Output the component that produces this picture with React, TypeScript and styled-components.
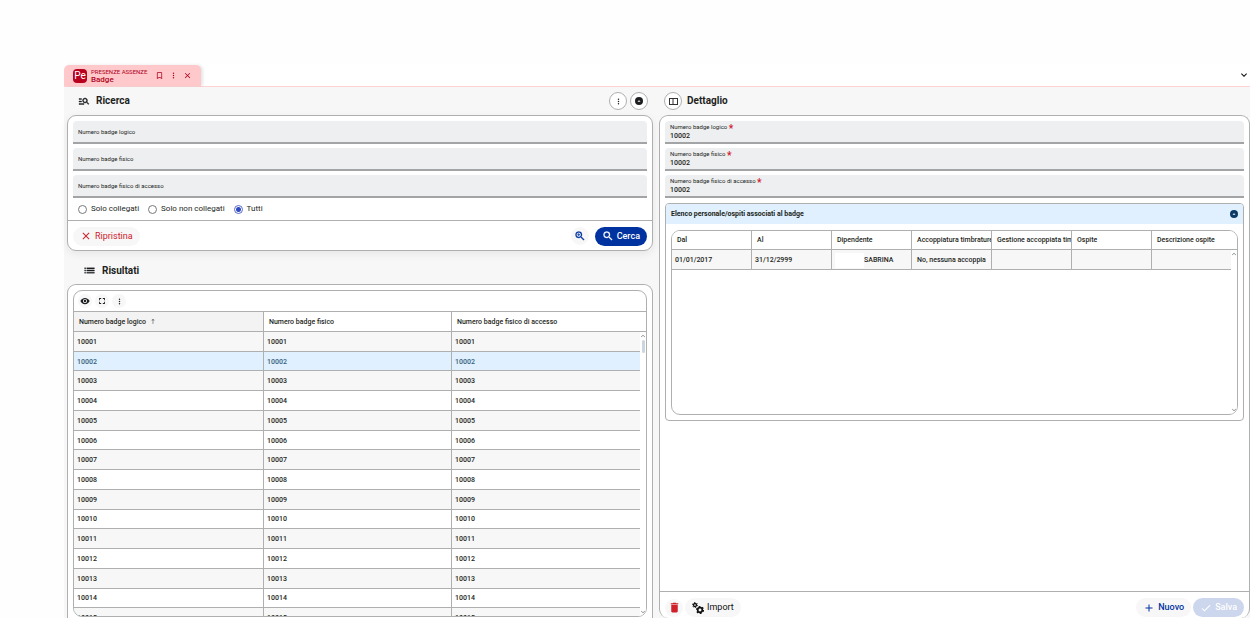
import React from "react";
import styled, { createGlobalStyle, css } from "styled-components";
import {
  MdAdd,
  MdBookmarkBorder,
  MdCheck,
  MdClose,
  MdDelete,
  MdFullscreen,
  MdKeyboardArrowDown,
  MdKeyboardArrowUp,
  MdList,
  MdManageSearch,
  MdMoreVert,
  MdSearch,
  MdVisibility,
  MdZoomIn,
} from "react-icons/md";

const line = "#aeb0b0";
const blue = "#0033a0";
const red = "#d0202a";

const GlobalStyle = createGlobalStyle`
  * { box-sizing: border-box; }
  body {
    margin: 0;
    background: #fefefe;
    color: #1d1f21;
    font-family: Roboto, "Liberation Sans", sans-serif;
    font-size: 7px;
  }
  button, input { font: inherit; color: inherit; }
  button { cursor: pointer; }
  svg { display: block; flex: none; }
  svg path[fill="none"] { stroke: none; }
`;

const Shell = styled.div`
  display: flex;
  flex-direction: column;
  height: 100vh;
  padding: 64px 0 0 64px;
  overflow: hidden;
`;

const TabBar = styled.nav`
  display: flex;
  justify-content: space-between;
  align-items: stretch;
  flex: none;
  height: 23px;
  border-bottom: 1px solid #ffd3d3;
  background: #ffffff;
`;

const Tab = styled.div`
  display: flex;
  align-items: center;
  gap: 4px;
  margin-top: 1px;
  padding: 0 9px;
  border-radius: 5px 5px 0 0;
  background: #ffc9cc;
  color: #b00020;
  box-shadow: 2px 0 3px #0000001a;
`;

const AppLogo = styled.span`
  display: grid;
  place-items: center;
  width: 14px;
  height: 14px;
  border-radius: 4px;
  background: #b8001f;
  color: #ffffff;
  font-size: 10px;
  font-weight: 400;
  line-height: 12px;
`;

const TabText = styled.span`
  display: flex;
  flex-direction: column;
  font-size: 8px;
  line-height: 9px;
  font-weight: 500;
  margin-right: 4px;
`;

const TabApp = styled.span`
  font-size: 6px;
  font-weight: 400;
  line-height: 7px;
`;

const PlainButton = styled.button`
  display: grid;
  place-items: center;
  padding: 0;
  border: 0;
  background: none;
`;

const TabActions = styled.span`
  display: flex;
  gap: 5px;
`;

const TabsToggle = styled(PlainButton)`
  color: #111111;
`;

const Workspace = styled.main`
  display: grid;
  grid-template-columns: 1fr 1fr;
  flex: 1;
  min-height: 0;
  background: #f7f7f7;
`;

const SearchSide = styled.div`
  display: flex;
  flex-direction: column;
  min-width: 0;
  min-height: 0;
  padding: 0 4px 0 3px;
`;

const DetailSide = styled(SearchSide)`
  padding: 0 0 0 2px;
`;

const PanelHead = styled.header<{ $tall?: boolean }>`
  display: flex;
  align-items: center;
  gap: 6px;
  flex: none;
  height: ${(p) => (p.$tall ? 33 : 28)}px;
  padding: ${(p) => (p.$tall ? "6px 5px 0 16px" : "0 5px 0 11px")};
`;

const DetailHead = styled(PanelHead)`
  padding-left: 5px;
  gap: 5px;
`;

const Title = styled.h2`
  flex: 1;
  margin: 0;
  font-size: 10px;
  line-height: 14px;
  font-weight: 700;
`;

const RoundButton = styled(PlainButton)`
  width: 18px;
  height: 18px;
  border: 1px solid ${line};
  border-radius: 50%;
  background: #ffffff;
`;

const HeadActions = styled.div`
  display: flex;
  gap: 3px;
`;

const Card = styled.section`
  display: flex;
  flex-direction: column;
  border: 1px solid ${line};
  border-radius: 9px;
  background: #ffffff;
`;

const SearchCard = styled(Card)`
  flex: none;
  box-shadow: 0 3px 8px #00000012;
`;

const ResultsCard = styled(Card)`
  flex: 1;
  min-height: 0;
  padding: 5px 5px 1px;
  border-bottom: 0;
  border-radius: 9px 9px 0 0;
`;

const DetailCard = styled(Card)`
  flex: 1;
  min-height: 0;
  border-bottom: 0;
`;

const Fields = styled.div`
  display: flex;
  flex-direction: column;
  gap: 4px;
  padding: 5px 5px 0;
`;

const FieldBox = styled.div<{ $stacked?: boolean }>`
  display: flex;
  height: 23px;
  padding: 0 5px;
  border-bottom: 2px solid #a2a4a5;
  border-radius: 4px 4px 0 0;
  background: #edeff1;
  ${(p) =>
    p.$stacked
      ? css`
          flex-direction: column;
          padding-top: 2px;
        `
      : css`
          align-items: center;
        `}
`;

const FieldLabel = styled.label`
  flex: none;
  height: 8px;
  font-size: 6px;
  line-height: 8px;
  white-space: nowrap;
`;

const Required = styled.span`
  color: ${red};
  font-size: 10px;
  font-weight: 700;
  line-height: 6px;
  vertical-align: -3px;
`;

const FieldInput = styled.input`
  flex: 1;
  min-width: 0;
  min-height: 0;
  padding: 0;
  border: 0;
  outline: 0;
  background: transparent;
  font-size: 7px;
  font-weight: 500;
  line-height: 9px;
`;

const Choices = styled.div`
  display: flex;
  align-items: center;
  gap: 9px;
  height: 22px;
  padding: 0 10px;
`;

const Choice = styled.label`
  display: flex;
  align-items: center;
  gap: 4px;
  font-size: 8px;
  line-height: 10px;
`;

const Radio = styled.input`
  appearance: none;
  width: 9px;
  height: 9px;
  margin: 0;
  border: 1px solid #77797b;
  border-radius: 50%;
  background: #ffffff;
  &:checked {
    border-color: #5a6cc8;
    background: radial-gradient(circle, #2f48c4 2px, #ffffff 3px);
  }
`;

const CardFoot = styled.footer`
  display: flex;
  align-items: center;
  gap: 2px;
  flex: none;
  height: 30px;
  padding: 1px 5px 0;
  border-top: 1px solid ${line};
`;

const DetailFoot = styled(CardFoot)`
  height: 27px;
  padding-top: 5px;
`;

const Spacer = styled.span`
  flex: 1;
`;

const tones = {
  danger: css`
    color: ${red};
    background: #f7f7f7;
    font-weight: 400;
  `,
  plain: css`
    color: #111111;
    background: #f7f7f7;
    font-weight: 400;
  `,
  link: css`
    color: ${blue};
    background: #f7f7f7;
  `,
  primary: css`
    color: #ffffff;
    background: ${blue};
  `,
  muted: css`
    color: #ffffff;
    background: #ccd6ec;
  `,
};

const Pill = styled.button<{ $tone: keyof typeof tones }>`
  display: flex;
  align-items: center;
  gap: 3px;
  height: 19px;
  padding: 0 7px;
  border: 0;
  border-radius: 10px;
  font-size: 9px;
  font-weight: 500;
  line-height: 11px;
  ${(p) => tones[p.$tone]}
`;

const IconPill = styled(Pill)`
  justify-content: center;
  width: 18px;
  height: 18px;
  padding: 0;
`;

const SearchActions = styled.div`
  display: flex;
  align-items: center;
  gap: 6px;
`;

const GridFrame = styled.div`
  position: relative;
  display: flex;
  flex-direction: column;
  flex: 1;
  min-height: 0;
  overflow: hidden;
  border: 1px solid ${line};
  border-radius: 9px;
  background: #ffffff;
`;

const GridTools = styled.div`
  display: flex;
  align-items: center;
  flex: none;
  height: 21px;
  padding-left: 2px;
  border-bottom: 1px solid ${line};
`;

const ToolButton = styled(PlainButton)`
  width: 14px;
  height: 14px;
  margin: 0 2px;
  border-radius: 50%;
  background: #f7f7f7;
  & + & {
    margin-left: 1px;
  }
`;

const ResultTable = styled.table`
  display: block;
  font-size: 7px;
  tr {
    display: grid;
    grid-template-columns: 190px 188px 1fr;
    border-bottom: 1px solid ${line};
  }
  thead tr {
    height: 20px;
  }
  thead,
  tbody {
    display: block;
  }
  tbody {
    display: grid;
    grid-template-rows: repeat(15, 1fr);
    height: 296px;
    margin-right: 6px;
  }
`;

const HeadCell = styled.th<{ $sorted?: boolean }>`
  display: flex;
  align-items: center;
  gap: 4px;
  min-width: 0;
  overflow: hidden;
  padding: 1px 0 0 5px;
  border-right: 1px solid ${line};
  background: ${(p) => (p.$sorted ? "#f3f3f3" : "#ffffff")};
  font-size: 7px;
  font-weight: 500;
  line-height: 9px;
  white-space: nowrap;
  &:last-child {
    border-right: 0;
  }
`;

const SortArrow = styled.span`
  color: #55585a;
  font-family: "DejaVu Sans", sans-serif;
  font-size: 7px;
  font-weight: 400;
`;

const Row = styled.tr<{ $selected?: boolean; $striped?: boolean }>`
  background: ${(p) => (p.$selected ? "#e0f0fe" : p.$striped ? "#f7f7f7" : "#ffffff")};
  color: ${(p) => (p.$selected ? "#35607f" : "#1d1f21")};
`;

const Cell = styled.td<{ $inset?: boolean }>`
  display: flex;
  align-items: center;
  min-width: 0;
  overflow: hidden;
  padding: 2px 0 0 ${(p) => (p.$inset ? 5 : 3)}px;
  border-right: 1px solid ${line};
  font-weight: 500;
  line-height: 9px;
  white-space: nowrap;
  &:last-child {
    border-right: 0;
  }
`;

const ScrollRail = styled.div<{ $top: number }>`
  position: absolute;
  top: ${(p) => p.$top}px;
  right: 0;
  bottom: 0;
  width: 6px;
  display: flex;
  flex-direction: column;
  align-items: center;
  background: #ffffff;
  color: #77797b;
`;

const ScrollThumb = styled.span`
  width: 3px;
  height: 13px;
  border-radius: 2px;
  background: #ccd6e0;
`;

const LinkedCard = styled.section`
  display: flex;
  flex-direction: column;
  height: 218px;
  margin: 5px 5px 0;
  overflow: hidden;
  border: 1px solid ${line};
  border-radius: 4px;
`;

const LinkedHead = styled.header`
  display: flex;
  align-items: center;
  justify-content: space-between;
  flex: none;
  height: 20px;
  padding: 0 5px;
  background: #e0f0fe;
  color: #0b3a66;
`;

const LinkedTitle = styled.h3`
  margin: 0;
  font-size: 7px;
  line-height: 9px;
  font-weight: 700;
  color: #1d1f21;
`;

const LinkedBody = styled.div`
  display: flex;
  flex: 1;
  min-height: 0;
  padding: 6px 5px 5px;
`;

const LinkedTable = styled.table`
  display: block;
  font-size: 7px;
  thead,
  tbody {
    display: block;
  }
  tbody {
    margin-right: 6px;
  }
  tr {
    display: grid;
    grid-template-columns: repeat(6, 80px) 1fr;
    border-bottom: 1px solid ${line};
  }
  thead tr {
    height: 19px;
  }
  tbody tr {
    height: 20px;
  }
`;

const Masked = styled.span`
  width: 29px;
  height: 15px;
  background: #ffffff;
`;

const DetailScroll = styled.div`
  flex: 1;
  min-height: 0;
  overflow: hidden;
`;

function PanelIcon() {
  return (
    <svg width="9" height="9" viewBox="0 0 18 18" fill="none" stroke="#333" strokeWidth="2">
      <rect x="1" y="3" width="16" height="12" />
      <path d="M8 3v12" stroke="#333" fill="#333" />
    </svg>
  );
}

function CollapseIcon() {
  return (
    <svg width="8" height="8" viewBox="0 0 16 16">
      <circle cx="8" cy="8" r="8" fill="currentColor" />
      <path d="M6 9 8 7l2 2z" fill="#fff" stroke="#fff" />
    </svg>
  );
}

function GearsIcon() {
  return (
    <svg width="12" height="12" viewBox="0 0 24 24" fill="none" stroke="#111">
      <circle cx="6" cy="6" r="3" strokeWidth="2.6" />
      <circle cx="6" cy="6" r="5" strokeWidth="2" strokeDasharray="2.6 2.63" />
      <circle cx="16" cy="16" r="4.6" strokeWidth="3.4" />
      <circle cx="16" cy="16" r="6.8" strokeWidth="2.6" strokeDasharray="3.6 3.52" />
    </svg>
  );
}

const searchFields = [
  ["logico", "Numero badge logico"],
  ["fisico", "Numero badge fisico"],
  ["accesso", "Numero badge fisico di accesso"],
];

const filters = ["Solo collegati", "Solo non collegati", "Tutti"];

const badges = Array.from({ length: 15 }, (_, i) => String(10001 + i));

const linkedColumns = [
  "Dal",
  "Al",
  "Dipendente",
  "Accoppiatura timbrature",
  "Gestione accoppiata tim",
  "Ospite",
  "Descrizione ospite",
];

export default function App() {
  return (
    <>
      <GlobalStyle />
      <Shell>
        <TabBar>
          <Tab>
            <AppLogo>Pe</AppLogo>
            <TabText>
              <TabApp>PRESENZE ASSENZE</TabApp>
              Badge
            </TabText>
            <TabActions>
              <PlainButton aria-label="Aggiungi ai preferiti"><MdBookmarkBorder size={9} /></PlainButton>
              <PlainButton aria-label="Altre opzioni"><MdMoreVert size={9} /></PlainButton>
              <PlainButton aria-label="Chiudi scheda"><MdClose size={9} /></PlainButton>
            </TabActions>
          </Tab>
          <TabsToggle aria-label="Elenco schede">
            <MdKeyboardArrowDown size={12} stroke="currentColor" />
          </TabsToggle>
        </TabBar>

        <Workspace>
          <SearchSide>
            <PanelHead>
              <MdManageSearch size={12} stroke="currentColor" strokeWidth={0.8} />
              <Title>Ricerca</Title>
              <HeadActions>
                <RoundButton aria-label="Opzioni ricerca"><MdMoreVert size={9} /></RoundButton>
                <RoundButton aria-label="Comprimi ricerca"><CollapseIcon /></RoundButton>
              </HeadActions>
            </PanelHead>

            <SearchCard>
              <Fields>
                {searchFields.map(([id, label]) => (
                  <FieldBox key={id}>
                    <FieldLabel htmlFor={`cerca-${id}`}>{label}</FieldLabel>
                    <FieldInput id={`cerca-${id}`} type="text" />
                  </FieldBox>
                ))}
              </Fields>
              <Choices>
                {filters.map((label) => (
                  <Choice key={label}>
                    <Radio type="radio" name="collegati" defaultChecked={label === "Tutti"} />
                    {label}
                  </Choice>
                ))}
              </Choices>
              <CardFoot>
                <Pill $tone="danger">
                  <MdClose size={12} />
                  Ripristina
                </Pill>
                <Spacer />
                <SearchActions>
                  <IconPill $tone="link" aria-label="Ricerca avanzata">
                    <MdZoomIn size={12} stroke="currentColor" strokeWidth={0.6} />
                  </IconPill>
                  <Pill $tone="primary">
                    <MdSearch size={12} stroke="currentColor" strokeWidth={0.6} />
                    Cerca
                  </Pill>
                </SearchActions>
              </CardFoot>
            </SearchCard>

            <PanelHead $tall>
              <MdList size={13} stroke="currentColor" strokeWidth={0.6} />
              <Title>Risultati</Title>
            </PanelHead>

            <ResultsCard>
              <GridFrame>
                <GridTools>
                  <ToolButton aria-label="Colonne visibili"><MdVisibility size={10} /></ToolButton>
                  <ToolButton aria-label="Schermo intero"><MdFullscreen size={10} /></ToolButton>
                  <ToolButton aria-label="Altre azioni"><MdMoreVert size={9} /></ToolButton>
                </GridTools>
                <ResultTable>
                  <thead>
                    <tr>
                      <HeadCell $sorted>Numero badge logico <SortArrow>↑</SortArrow></HeadCell>
                      <HeadCell>Numero badge fisico</HeadCell>
                      <HeadCell>Numero badge fisico di accesso</HeadCell>
                    </tr>
                  </thead>
                  <tbody>
                    {badges.map((badge, i) => (
                      <Row key={badge} $selected={badge === "10002"} $striped={i % 2 === 0}>
                        <Cell>{badge}</Cell>
                        <Cell>{badge}</Cell>
                        <Cell>{badge}</Cell>
                      </Row>
                    ))}
                  </tbody>
                </ResultTable>
                <ScrollRail $top={41}>
                  <MdKeyboardArrowUp size={8} />
                  <ScrollThumb />
                  <Spacer />
                  <MdKeyboardArrowDown size={8} stroke="currentColor" />
                </ScrollRail>
              </GridFrame>
            </ResultsCard>
          </SearchSide>

          <DetailSide>
            <DetailHead>
              <RoundButton aria-label="Mostra pannello"><PanelIcon /></RoundButton>
              <Title>Dettaglio</Title>
            </DetailHead>
            <DetailCard>
              <DetailScroll>
                <Fields>
                  {searchFields.map(([id, label]) => (
                    <FieldBox key={id} $stacked>
                      <FieldLabel htmlFor={`dettaglio-${id}`}>
                        {label} <Required>*</Required>
                      </FieldLabel>
                      <FieldInput id={`dettaglio-${id}`} type="text" defaultValue="10002" />
                    </FieldBox>
                  ))}
                </Fields>
                <LinkedCard>
                  <LinkedHead>
                    <LinkedTitle>Elenco personale/ospiti associati al badge</LinkedTitle>
                    <PlainButton aria-label="Comprimi elenco"><CollapseIcon /></PlainButton>
                  </LinkedHead>
                  <LinkedBody>
                    <GridFrame>
                      <LinkedTable>
                        <thead>
                          <tr>
                            {linkedColumns.map((name) => (
                              <HeadCell key={name}>{name}</HeadCell>
                            ))}
                          </tr>
                        </thead>
                        <tbody>
                          <Row $striped>
                            <Cell>01/01/2017</Cell>
                            <Cell>31/12/2999</Cell>
                            <Cell><Masked />SABRINA</Cell>
                            <Cell $inset>No, nessuna accoppia</Cell>
                            <Cell />
                            <Cell />
                            <Cell />
                          </Row>
                        </tbody>
                      </LinkedTable>
                      <ScrollRail $top={19}>
                        <MdKeyboardArrowUp size={8} />
                        <Spacer />
                        <MdKeyboardArrowDown size={8} />
                      </ScrollRail>
                    </GridFrame>
                  </LinkedBody>
                </LinkedCard>
              </DetailScroll>
              <DetailFoot>
                <IconPill $tone="danger" aria-label="Elimina"><MdDelete size={13} /></IconPill>
                <Pill $tone="plain">
                  <GearsIcon />
                  Import
                </Pill>
                <Spacer />
                <Pill $tone="link">
                  <MdAdd size={12} />
                  Nuovo
                </Pill>
                <Pill $tone="muted" disabled>
                  <MdCheck size={12} />
                  Salva
                </Pill>
              </DetailFoot>
            </DetailCard>
          </DetailSide>
        </Workspace>
      </Shell>
    </>
  );
}
